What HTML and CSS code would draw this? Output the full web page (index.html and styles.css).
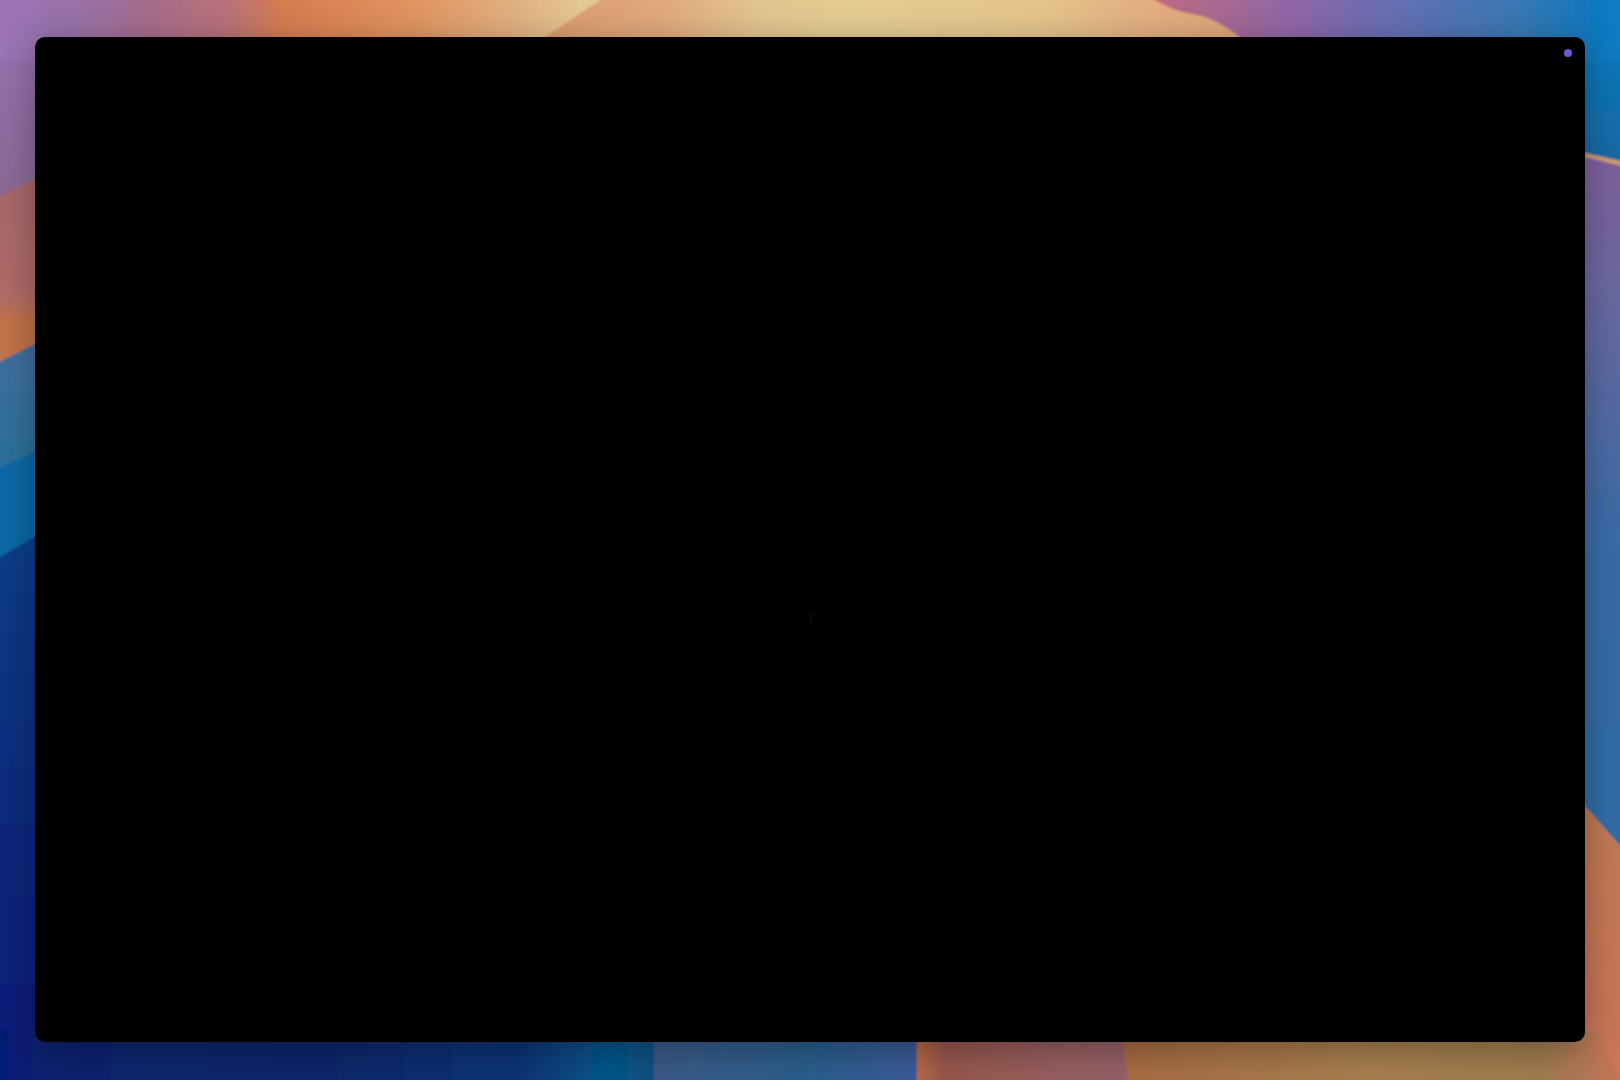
FILE: index.html
```html
<!DOCTYPE html>
<html lang="en">
<head>
    <meta charset="UTF-8">
    <meta name="viewport" content="width=device-width, initial-scale=1.0">
    <title>Desktop</title>
    <link rel="stylesheet" href="styles.css">
</head>
<body>
    <!-- wallpaper: only the strips round the window can be seen -->
    <svg class="wallpaper" viewBox="0 0 1620 1080" preserveAspectRatio="none" aria-hidden="true">
        <defs>
            <linearGradient id="topLeft" gradientUnits="userSpaceOnUse" x1="-5" y1="0" x2="608" y2="0">
                <stop offset="0" stop-color="#9c74b8"/>
                <stop offset="0.13" stop-color="#9872a8"/>
                <stop offset="0.25" stop-color="#a66c8c"/>
                <stop offset="0.38" stop-color="#b87278"/>
                <stop offset="0.47" stop-color="#d67c50"/>
                <stop offset="0.67" stop-color="#e0925f"/>
                <stop offset="0.85" stop-color="#e0b080"/>
                <stop offset="0.96" stop-color="#e4c894"/>
            </linearGradient>
            <linearGradient id="topMid" gradientUnits="userSpaceOnUse" x1="510" y1="0" x2="1265" y2="0">
                <stop offset="0" stop-color="#d89868"/>
                <stop offset="0.2" stop-color="#e0a87c"/>
                <stop offset="0.33" stop-color="#e2c48e"/>
                <stop offset="0.45" stop-color="#e4cb92"/>
                <stop offset="0.7" stop-color="#e4c48c"/>
                <stop offset="0.85" stop-color="#e2ad80"/>
                <stop offset="1" stop-color="#dca274"/>
            </linearGradient>
            <linearGradient id="topRight" gradientUnits="userSpaceOnUse" x1="1150" y1="0" x2="1625" y2="0">
                <stop offset="0" stop-color="#c06c7c"/>
                <stop offset="0.3" stop-color="#8f66a8"/>
                <stop offset="0.55" stop-color="#5f70b4"/>
                <stop offset="0.78" stop-color="#3878b4"/>
                <stop offset="0.92" stop-color="#1278bc"/>
                <stop offset="1" stop-color="#0a7cc6"/>
            </linearGradient>
            <linearGradient id="leftPurple" x1="0" y1="0" x2="0" y2="1">
                <stop offset="0" stop-color="#9c74b8"/>
                <stop offset="1" stop-color="#8a6894"/>
            </linearGradient>
            <linearGradient id="leftRose" x1="0" y1="0" x2="0" y2="1">
                <stop offset="0" stop-color="#a8666c"/>
                <stop offset="0.6" stop-color="#ae6c68"/>
                <stop offset="0.72" stop-color="#c2724a"/>
                <stop offset="1" stop-color="#c47448"/>
            </linearGradient>
            <linearGradient id="leftBlue" x1="0" y1="0" x2="0" y2="1">
                <stop offset="0" stop-color="#486ca0"/>
                <stop offset="0.5" stop-color="#34709c"/>
                <stop offset="1" stop-color="#2a7098"/>
            </linearGradient>
            <linearGradient id="rightLower" x1="0" y1="0" x2="0" y2="1">
                <stop offset="0" stop-color="#80609a"/>
                <stop offset="0.2" stop-color="#6a68a0"/>
                <stop offset="0.55" stop-color="#3a6ca6"/>
                <stop offset="1" stop-color="#2f6ca6"/>
            </linearGradient>
            <linearGradient id="rightTop" x1="0" y1="0" x2="0" y2="1">
                <stop offset="0" stop-color="#0c7abf"/>
                <stop offset="1" stop-color="#1668a4"/>
            </linearGradient>
            <linearGradient id="corner" x1="0" y1="0" x2="0" y2="1">
                <stop offset="0" stop-color="#c07a50"/>
                <stop offset="1" stop-color="#ca745a"/>
            </linearGradient>
            <linearGradient id="darkBlue" x1="0" y1="0" x2="0" y2="1">
                <stop offset="0" stop-color="#0a3f88"/>
                <stop offset="0.5" stop-color="#0a2a7e"/>
                <stop offset="1" stop-color="#061a78"/>
            </linearGradient>
            <linearGradient id="bottomLeft" x1="0" y1="0" x2="1" y2="0">
                <stop offset="0" stop-color="#061a78"/>
                <stop offset="0.1" stop-color="#0a2470"/>
                <stop offset="0.5" stop-color="#08286c"/>
                <stop offset="0.8" stop-color="#0a3478"/>
                <stop offset="0.93" stop-color="#06588c"/>
                <stop offset="1" stop-color="#085080"/>
            </linearGradient>
            <linearGradient id="bottomMid" x1="0" y1="0" x2="1" y2="0">
                <stop offset="0" stop-color="#3c5a88"/>
                <stop offset="0.6" stop-color="#2a5e8c"/>
                <stop offset="1" stop-color="#3c5a98"/>
            </linearGradient>
            <linearGradient id="bottomRose" x1="0" y1="0" x2="1" y2="0">
                <stop offset="0" stop-color="#b86a42"/>
                <stop offset="0.12" stop-color="#98584e"/>
                <stop offset="1" stop-color="#96626a"/>
            </linearGradient>
            <linearGradient id="bottomSand" x1="0" y1="0" x2="1" y2="0">
                <stop offset="0" stop-color="#a86c42"/>
                <stop offset="0.5" stop-color="#a88050"/>
                <stop offset="0.85" stop-color="#a07c50"/>
                <stop offset="1" stop-color="#c67258"/>
            </linearGradient>
            <filter id="soften" x="0" y="0" width="100%" height="100%"><feGaussianBlur stdDeviation="1.2"/></filter>
        </defs>
        <g filter="url(#soften)">
            <rect x="-5" y="-5" width="1630" height="1090" fill="#3a5c90"/>
            <!-- left edge, drawn top down so each band overlaps the one before -->
            <rect x="-5" y="-5" width="65" height="210" fill="url(#leftPurple)"/>
            <polygon points="-5,199 60,166 60,380 -5,380" fill="url(#leftRose)"/>
            <polygon points="-5,364 60,331 60,460 -5,480" fill="url(#leftBlue)"/>
            <polygon points="-5,470 60,440 60,550 -5,570" fill="#0a68a6"/>
            <polygon points="-5,560 60,522 60,1085 -5,1085" fill="url(#darkBlue)"/>
            <!-- right edge -->
            <rect x="1560" y="40" width="65" height="125" fill="url(#rightTop)"/>
            <polygon points="1560,148 1625,162 1625,860 1560,790" fill="url(#rightLower)"/>
            <polygon points="1585,153 1625,162 1625,167 1585,157" fill="#d49a70"/>
            <polygon points="1560,778 1625,851 1625,1085 1560,1085" fill="url(#corner)"/>
            <!-- top edge -->
            <polygon points="-5,-5 620,-5 620,60 -5,60" fill="url(#topLeft)"/>
            <polygon points="608,-5 1195,-5 1265,60 510,60" fill="url(#topMid)"/>
            <path d="M1148,-5 C1160,4 1172,9 1182,12 C1192,14 1200,15 1208,18 C1220,23 1230,30 1240,37 L1280,60 L1625,60 L1625,-5 Z" fill="url(#topRight)"/>
            <!-- bottom edge -->
            <rect x="-5" y="1030" width="660" height="55" fill="url(#bottomLeft)"/>
            <rect x="654" y="1030" width="264" height="55" fill="url(#bottomMid)"/>
            <polygon points="917,1030 1123,1030 1130,1085 917,1085" fill="url(#bottomRose)"/>
            <polygon points="1122,1030 1600,1030 1620,1085 1129,1085" fill="url(#bottomSand)"/>
        </g>
    </svg>

    <main class="window">
        <span class="caret"></span>
        <span class="status-dot"></span>
    </main>
</body>
</html>
```

FILE: styles.css
```css
html, body {
    height: 100%;
}

body {
    margin: 0;
    padding: 37px 35px 38px;
    box-sizing: border-box;
    display: flex;
    overflow: hidden;
    background-color: #3a5c90;
    font-family: "Liberation Sans", Arial, sans-serif;
}

.wallpaper {
    position: fixed;
    top: 0;
    left: 0;
    width: 100%;
    height: 100%;
}

.window {
    position: relative;
    flex: 1;
    background-color: #000;
    border-radius: 10px;
    box-shadow: 0 8px 36px rgba(0, 0, 0, 0.32);
}

.status-dot {
    position: absolute;
    top: 12px;
    right: 13px;
    width: 8px;
    height: 8px;
    border-radius: 50%;
    background-color: #6a5ae0;
}

.caret {
    position: absolute;
    top: 576px;
    left: 775px;
    width: 1px;
    height: 10px;
    background-color: #101010;
}
```
